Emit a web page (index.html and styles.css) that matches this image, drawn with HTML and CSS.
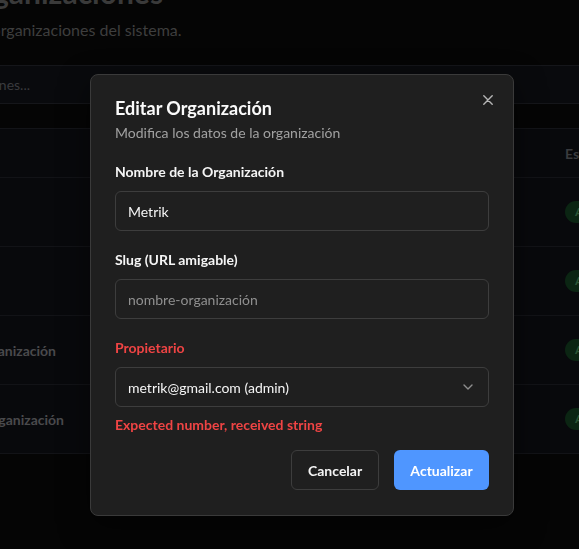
FILE: index.html
```html
<!DOCTYPE html>
<html lang="es">
<head>
<meta charset="utf-8">
<title>Editar Organización</title>
<link rel="stylesheet" href="styles.css">
</head>
<body>
<div class="page">
  <header class="page-head">
    <h1 class="page-title">Organizaciones</h1>
    <p class="page-sub">Gestiona las organizaciones del sistema.</p>
  </header>
  <div class="search">
    <div class="search-clip"><span>Buscar organizaciones...</span></div>
  </div>
  <div class="table">
    <div class="row head">
      <div class="cell-name"></div>
      <div class="spacer"></div>
      <div class="cell-status">Estado</div>
    </div>
    <div class="row">
      <div class="cell-name"></div>
      <div class="spacer"></div>
      <div class="cell-status"><span class="badge">Activo</span></div>
    </div>
    <div class="row">
      <div class="cell-name"></div>
      <div class="spacer"></div>
      <div class="cell-status"><span class="badge">Activo</span></div>
    </div>
    <div class="row">
      <div class="cell-name clip-a"><span>Nueva Organización</span></div>
      <div class="spacer"></div>
      <div class="cell-status"><span class="badge">Activo</span></div>
    </div>
    <div class="row">
      <div class="cell-name clip-b"><span>Otra Organización</span></div>
      <div class="spacer"></div>
      <div class="cell-status"><span class="badge">Activo</span></div>
    </div>
  </div>
</div>

<div class="modal" role="dialog">
  <button class="close" aria-label="Cerrar">
    <svg width="10" height="10" viewBox="0 0 10 10"><path d="M0.8 0.8 L9.2 9.2 M9.2 0.8 L0.8 9.2" stroke="#b5b5b5" stroke-width="1.4" stroke-linecap="round" fill="none"/></svg>
  </button>
  <h2 class="m-title">Editar Organización</h2>
  <p class="m-desc">Modifica los datos de la organización</p>

  <div class="field">
    <label class="label">Nombre de la Organización</label>
    <div class="input">Metrik</div>
  </div>
  <div class="field">
    <label class="label">Slug (URL amigable)</label>
    <div class="input placeholder">nombre-organización</div>
  </div>
  <div class="field">
    <label class="label error">Propietario</label>
    <div class="input select">
      <span>metrik@gmail.com (admin)</span>
      <svg width="10" height="6" viewBox="0 0 10 6"><path d="M1 1 L5 5 L9 1" stroke="#8e8e8e" stroke-width="1.4" fill="none" stroke-linecap="round" stroke-linejoin="round"/></svg>
    </div>
    <p class="err-msg">Expected number, received string</p>
  </div>

  <div class="actions">
    <button class="btn btn-outline">Cancelar</button>
    <button class="btn btn-primary">Actualizar</button>
  </div>
</div>
</body>
</html>
```

FILE: styles.css
```css
* { box-sizing: border-box; }
html, body { margin: 0; padding: 0; }
body {
  background: #050505;
  width: 579px;
  height: 549px;
  overflow: hidden;
  font-family: "Segoe UI", Lato, "Noto Sans", sans-serif;
  color: #f2f2f2;
}
.page { width: 680px; }
.page-head { height: 65px; overflow: hidden; }
.page-title {
  margin: -26px 0 0 -42px;
  font-size: 30px;
  line-height: 36px;
  font-weight: 700;
  color: #3a3a3a;
}
.page-sub {
  margin: 8px 0 0 -98px;
  font-size: 16px;
  line-height: 24px;
  color: #3e3e3e;
}
.search {
  height: 39px;
  background: #090a0d;
  border-top: 1px solid #15161a;
  border-bottom: 1px solid #15161a;
  display: flex;
  align-items: center;
}
.search-clip {
  width: 30px;
  overflow: hidden;
  display: flex;
  justify-content: flex-end;
  white-space: nowrap;
  font-size: 14px;
  color: #3a3b3e;
}
.table {
  margin-top: 24px;
  background: #08090c;
  border-top: 1px solid #131418;
}
.row {
  display: flex;
  align-items: center;
  height: 69px;
  border-bottom: 1px solid #121317;
}
.row.head { height: 49px; }
.cell-name {
  width: 70px;
  overflow: hidden;
  display: flex;
  justify-content: flex-end;
  white-space: nowrap;
  font-size: 14px;
  font-weight: 700;
  color: #4a4a4c;
}
.cell-name.clip-a { width: 56px; }
.cell-name.clip-b { width: 64px; }
.spacer { flex: 1; }
.cell-status {
  width: 115px;
  font-size: 14px;
  font-weight: 700;
  color: #3a3b3e;
}
.badge {
  display: inline-block;
  padding: 2px 10px;
  border-radius: 11px;
  background: #0b2513;
  color: #2c5636;
  font-size: 12px;
  font-weight: 700;
  line-height: 18px;
}

/* Modal */
.modal {
  position: fixed;
  left: 90px;
  top: 74px;
  width: 424px;
  height: 442px;
  background: #1f1f1f;
  border: 1px solid #3a3a3a;
  border-radius: 8px;
  padding: 21px 24px 24px;
  box-shadow: 0 10px 30px rgba(0,0,0,0.5);
}
.close {
  position: absolute;
  top: 19px;
  right: 19px;
  width: 12px;
  height: 12px;
  padding: 1px;
  border: 0;
  background: none;
  display: flex;
  align-items: center;
  justify-content: center;
}
.m-title {
  margin: 0;
  font-size: 18px;
  line-height: 24px;
  font-weight: 700;
  color: #fafafa;
}
.m-desc {
  margin: 3px 0 0;
  font-size: 14px;
  line-height: 20px;
  color: #a1a1a1;
}
.field { margin-top: 19px; }
.label {
  display: block;
  font-size: 14px;
  line-height: 20px;
  font-weight: 700;
  color: #f5f5f5;
}
.label.error { color: #ef4444; }
.input {
  margin-top: 9px;
  height: 40px;
  border: 1px solid #3d3d3d;
  border-radius: 6px;
  padding: 0 12px;
  display: flex;
  align-items: center;
  font-size: 14px;
  color: #f5f5f5;
}
.input.placeholder { color: #8f8f8f; }
.input.select { justify-content: space-between; padding-right: 15px; }
.err-msg {
  margin: 8px 0 0;
  font-size: 14px;
  line-height: 20px;
  font-weight: 700;
  color: #ef4444;
}
.actions {
  margin-top: 15px;
  display: flex;
  justify-content: flex-end;
  gap: 15px;
}
.btn {
  height: 40px;
  border-radius: 6px;
  font-family: inherit;
  font-size: 14px;
  font-weight: 700;
  padding: 0 16px;
  cursor: pointer;
}
.btn-outline {
  background: transparent;
  border: 1px solid #3d3d3d;
  color: #f5f5f5;
  width: 88px;
}
.btn-primary {
  background: #4f96ff;
  border: 0;
  color: #ffffff;
  width: 95px;
}
```
